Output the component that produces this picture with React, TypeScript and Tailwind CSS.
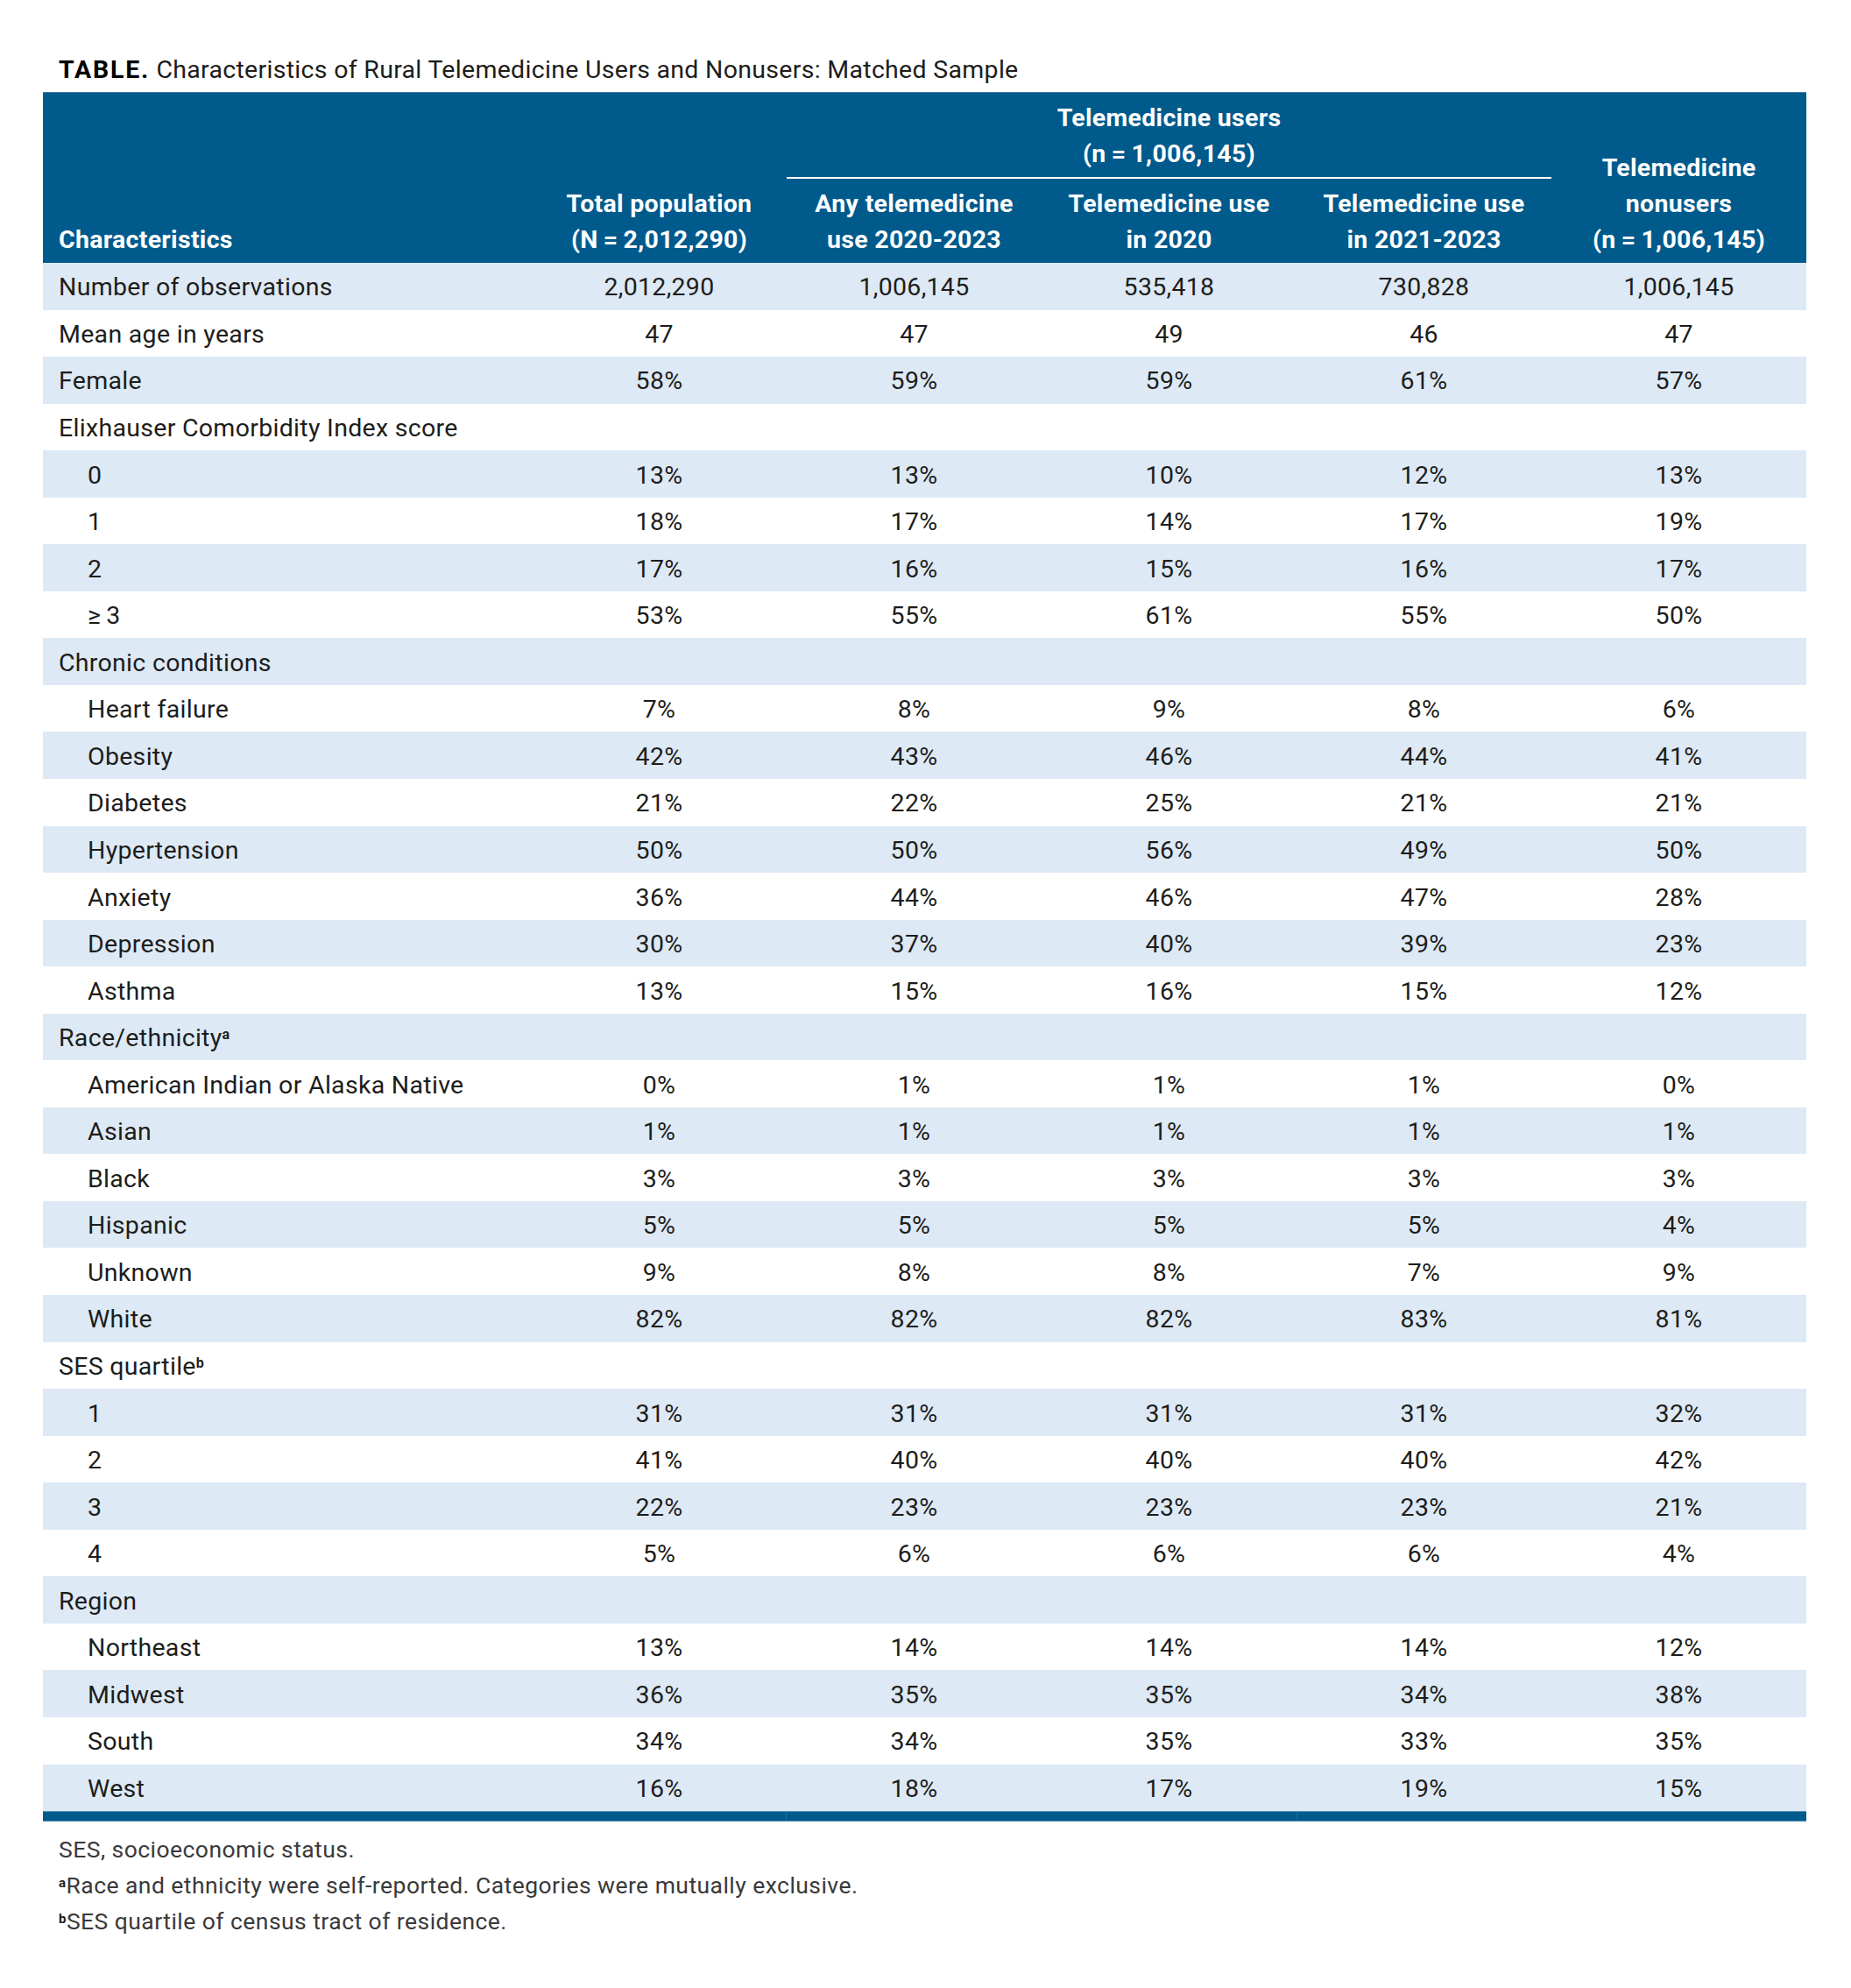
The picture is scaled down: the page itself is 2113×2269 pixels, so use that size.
import React from "react";

type Row = {
  label: string;
  indent?: boolean;
  note?: string;
  values?: string[];
};

const rows: Row[] = [
  { label: "Number of observations", values: ["2,012,290", "1,006,145", "535,418", "730,828", "1,006,145"] },
  { label: "Mean age in years", values: ["47", "47", "49", "46", "47"] },
  { label: "Female", values: ["58%", "59%", "59%", "61%", "57%"] },
  { label: "Elixhauser Comorbidity Index score" },
  { label: "0", indent: true, values: ["13%", "13%", "10%", "12%", "13%"] },
  { label: "1", indent: true, values: ["18%", "17%", "14%", "17%", "19%"] },
  { label: "2", indent: true, values: ["17%", "16%", "15%", "16%", "17%"] },
  { label: "\u2265\u20093", indent: true, values: ["53%", "55%", "61%", "55%", "50%"] },
  { label: "Chronic conditions" },
  { label: "Heart failure", indent: true, values: ["7%", "8%", "9%", "8%", "6%"] },
  { label: "Obesity", indent: true, values: ["42%", "43%", "46%", "44%", "41%"] },
  { label: "Diabetes", indent: true, values: ["21%", "22%", "25%", "21%", "21%"] },
  { label: "Hypertension", indent: true, values: ["50%", "50%", "56%", "49%", "50%"] },
  { label: "Anxiety", indent: true, values: ["36%", "44%", "46%", "47%", "28%"] },
  { label: "Depression", indent: true, values: ["30%", "37%", "40%", "39%", "23%"] },
  { label: "Asthma", indent: true, values: ["13%", "15%", "16%", "15%", "12%"] },
  { label: "Race/ethnicity", note: "a" },
  { label: "American Indian or Alaska Native", indent: true, values: ["0%", "1%", "1%", "1%", "0%"] },
  { label: "Asian", indent: true, values: ["1%", "1%", "1%", "1%", "1%"] },
  { label: "Black", indent: true, values: ["3%", "3%", "3%", "3%", "3%"] },
  { label: "Hispanic", indent: true, values: ["5%", "5%", "5%", "5%", "4%"] },
  { label: "Unknown", indent: true, values: ["9%", "8%", "8%", "7%", "9%"] },
  { label: "White", indent: true, values: ["82%", "82%", "82%", "83%", "81%"] },
  { label: "SES quartile", note: "b" },
  { label: "1", indent: true, values: ["31%", "31%", "31%", "31%", "32%"] },
  { label: "2", indent: true, values: ["41%", "40%", "40%", "40%", "42%"] },
  { label: "3", indent: true, values: ["22%", "23%", "23%", "23%", "21%"] },
  { label: "4", indent: true, values: ["5%", "6%", "6%", "6%", "4%"] },
  { label: "Region" },
  { label: "Northeast", indent: true, values: ["13%", "14%", "14%", "14%", "12%"] },
  { label: "Midwest", indent: true, values: ["36%", "35%", "35%", "34%", "38%"] },
  { label: "South", indent: true, values: ["34%", "34%", "35%", "33%", "35%"] },
  { label: "West", indent: true, values: ["16%", "18%", "17%", "19%", "15%"] },
];

const n = (v: string) => `(n\u2009=\u2009${v})`;

function HeaderCell({ lines, className }: { lines: string[]; className?: string }) {
  return (
    <div className={`flex flex-col items-center text-center ${className ?? ""}`}>
      {lines.map((l) => (
        <span key={l} className="leading-[41px] whitespace-nowrap">
          {l}
        </span>
      ))}
    </div>
  );
}

export default function App() {
  return (
    <div
      className="w-[2113px] min-h-[2269px] bg-white pl-[49px] tracking-[0.3px] text-[#1d1d1b]"
      style={{ fontFamily: "Roboto, 'Noto Sans', sans-serif" }}
    >
      {/* title */}
      <div className="pt-[59px] pl-[18px] text-[28.5px] leading-[41px]">
        <span className="font-bold tracking-[1.8px] text-black">TABLE.</span>{" "}
        Characteristics of Rural Telemedicine Users and Nonusers: Matched Sample
      </div>

      <div className="mt-[5px] w-[2013px]">
        {/* header */}
        <div className="grid h-[195px] grid-cols-[558px_repeat(5,291px)] border-t border-[#3d7fa8] bg-[#005a8c] text-[28.5px] font-bold text-white">
          <div className="self-end pb-[6px] pl-[18px] leading-[41px]">Characteristics</div>
          <HeaderCell
            className="self-end pb-[6px]"
            lines={["Total population", "(N\u2009=\u20092,012,290)"]}
          />
          <div className="col-span-3 flex flex-col">
            <HeaderCell className="pt-[8px]" lines={["Telemedicine users", n("1,006,145")]} />
            <div className="mt-[6px] h-[2px] w-full bg-white" />
            <div className="mt-[8px] grid grid-cols-3">
              <HeaderCell lines={["Any telemedicine", "use 2020-2023"]} />
              <HeaderCell lines={["Telemedicine use", "in 2020"]} />
              <HeaderCell lines={["Telemedicine use", "in 2021-2023"]} />
            </div>
          </div>
          <HeaderCell
            className="self-end pb-[6px]"
            lines={["Telemedicine", "nonusers", n("1,006,145")]}
          />
        </div>

        {/* body rows */}
        {rows.map((r, i) => (
          <div
            key={i}
            className={`grid h-[53.55px] grid-cols-[558px_repeat(5,291px)] items-center pt-[4px] text-[28.5px] ${
              i % 2 === 0 ? "bg-[#dde9f5]" : "bg-white"
            }`}
          >
            <div className={`whitespace-nowrap ${r.indent ? "pl-[51px]" : "pl-[18px]"}`}>
              {r.label}
              {r.note && <sup className="text-[16px] font-bold">{r.note}</sup>}
            </div>
            {(r.values ?? ["", "", "", "", ""]).map((v, j) => (
              <div key={j} className="text-center">
                {v}
              </div>
            ))}
          </div>
        ))}

        {/* closing bar */}
        <div className="flex h-[12px] border-y border-[#4f8fba] bg-[#005a8c]">
          <div className="w-[848px]" />
          <div className="w-[583px] border-l border-[#1a6a9a]" />
          <div className="flex-1 border-l border-[#1a6a9a]" />
        </div>
      </div>

      {/* footnotes */}
      <div className="mt-[11px] pl-[18px] text-[26.5px] leading-[41px] tracking-[0.45px] text-[#3a3a3a]">
        <div>SES, socioeconomic status.</div>
        <div>
          <sup className="text-[15px] font-bold text-[#1d1d1b]">a</sup>Race and ethnicity were self-reported.
          Categories were mutually exclusive.
        </div>
        <div>
          <sup className="text-[15px] font-bold text-[#1d1d1b]">b</sup>SES quartile of census tract of residence.
        </div>
      </div>
    </div>
  );
}
